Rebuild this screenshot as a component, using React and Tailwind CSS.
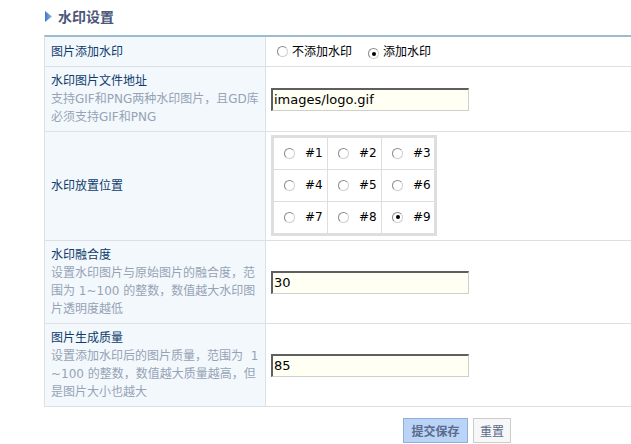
import React from "react";

const FONT = { fontFamily: '"DejaVu Sans", "Noto Sans CJK SC", sans-serif' };

function Radio({ checked }) {
  return (
    <span className="inline-flex items-center justify-center w-[11px] h-[11px] rounded-full border border-t-[#8a8a8a] border-l-[#8a8a8a] border-b-[#d0d0d0] border-r-[#d0d0d0] bg-white shrink-0">
      {checked && <span className="w-[4px] h-[4px] rounded-full bg-black" />}
    </span>
  );
}

function TextInput({ value }) {
  return (
    <div className="w-[198px] h-[23px] bg-[#fffff3] border-t-2 border-l-2 border-t-[#5f5f5f] border-l-[#5f5f5f] border-b border-r border-b-[#cfcfcf] border-r-[#cfcfcf] flex items-center pl-[1px] text-[13px] text-black">
      {value}
    </div>
  );
}

function Row({ label, desc, children, h, className = "" }) {
  return (
    <div className={`flex border-b border-[#dcdfe3] ${className}`} style={h ? { height: h } : undefined}>
      <div className="w-[221px] shrink-0 bg-[#f3f8fd] border-r border-[#dcdfe3] pl-[6px] pr-[4px] py-[5px] flex flex-col justify-center text-[12px] leading-[18px]">
        <div className="text-[#0d3c6c]">{label}</div>
        {desc &&
          desc.map((line, i) => (
            <div key={i} className="text-[#96a3b5] whitespace-pre">
              {line}
            </div>
          ))}
      </div>
      <div className="flex-1 bg-white pl-[5px] flex items-center">{children}</div>
    </div>
  );
}

export default function App() {
  const cells = [1, 2, 3, 4, 5, 6, 7, 8, 9];
  return (
    <div className="w-[631px] h-[444px] overflow-hidden bg-white" style={FONT}>
      <div className="ml-[44px] w-[826px]">
        <div className="h-[35px] flex items-center gap-[6px] pl-[1px]">
          <svg width="7" height="11" viewBox="0 0 7 11" className="mt-[-3px]">
            <defs>
              <linearGradient id="tg" x1="0" y1="0" x2="1" y2="0">
                <stop offset="0" stopColor="#3f78c8" />
                <stop offset="1" stopColor="#8fb4e6" />
              </linearGradient>
            </defs>
            <polygon points="0,0 7,5.5 0,11" fill="url(#tg)" />
          </svg>
          <span className="text-[14px] font-bold text-[#4a5778] mt-[-3px]" style={{ fontFamily: '"Noto Sans CJK SC", sans-serif' }}>
            水印设置
          </span>
        </div>
        <div className="border-t-2 border-[#9dbccb] border-l border-l-[#dcdfe3]">
          <Row label="图片添加水印" h="30px" className="[&>div:first-child]:py-0 [&>div:first-child]:pt-[1px]">
            <div className="flex items-center text-[12px] text-black pl-[6px]">
              <Radio />
              <span className="ml-[4px]">不添加水印</span>
              <span className="ml-[16px]"><Radio checked /></span>
              <span className="ml-[4px]">添加水印</span>
            </div>
          </Row>
          <Row label="水印图片文件地址" desc={["支持GIF和PNG两种水印图片，且GD库", "必须支持GIF和PNG"]}>
            <TextInput value="images/logo.gif" />
          </Row>
          <Row label="水印放置位置" h="109px">
            <div className="border-[3px] border-[#dedede] grid grid-cols-[53px_53px_52px] gap-[1px] bg-[#dedede] mt-[-2px]">
              {cells.map((n) => (
                <div key={n} className="bg-white h-[31px] flex items-center pl-[10px] text-[12px] text-black">
                  <Radio checked={n === 9} />
                  <span className="ml-[10px]">#{n}</span>
                </div>
              ))}
            </div>
          </Row>
          <Row
            label="水印融合度"
            desc={["设置水印图片与原始图片的融合度，范", "围为 1~100 的整数，数值越大水印图", "片透明度越低"]}
          >
            <TextInput value="30" />
          </Row>
          <Row
            label="图片生成质量"
            desc={["设置添加水印后的图片质量，范围为  1", "~100 的整数，数值越大质量越高，但", "是图片大小也越大"]}
          >
            <TextInput value="85" />
          </Row>
        </div>
        <div className="flex justify-center gap-[5px] mt-[11px]">
          <button className="w-[65px] h-[25px] bg-[#b9d4f6] border border-[#8fb0d8] text-[12px] font-bold text-[#5a6b8c]" style={{ fontFamily: '"Noto Sans CJK SC", sans-serif' }}>
            提交保存
          </button>
          <button className="w-[38px] h-[25px] bg-[#f7f7f7] border border-[#cccccc] text-[12px] text-[#5a6b8c]" style={{ fontFamily: '"Noto Sans CJK SC", sans-serif' }}>
            重置
          </button>
        </div>
      </div>
    </div>
  );
}
